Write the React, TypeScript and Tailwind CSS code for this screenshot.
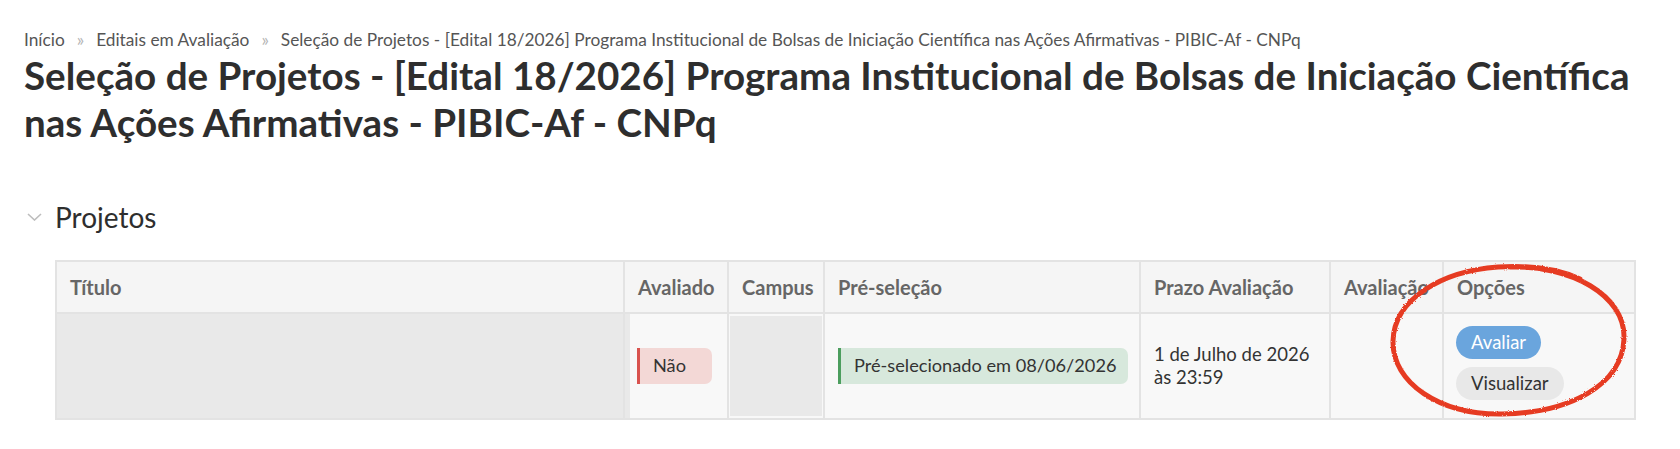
import React from "react";

export default function App() {
  return (
    <div className="relative w-[1680px] h-[449px] overflow-hidden bg-white font-['Lato','Noto_Sans',sans-serif] text-[#333]">
      <div className="pl-[24px] pr-[30px] pt-[29px]">
        <nav className="flex items-center whitespace-nowrap text-[17.3px] leading-[22px] text-[#555]">
          <span>Início</span>
          <span className="mx-[12px] text-[#b5b5b5]">»</span>
          <span>Editais em Avaliação</span>
          <span className="mx-[12px] text-[#b5b5b5]">»</span>
          <span>Seleção de Projetos - [Edital 18/2026] Programa Institucional de Bolsas de Iniciação Científica nas Ações Afirmativas - PIBIC-Af - CNPq</span>
        </nav>
        <h1 className="mt-[1px] text-[38.6px] font-bold leading-[47px] text-[#2e2e2e]">
          Seleção de Projetos - [Edital 18/2026] Programa Institucional de Bolsas de Iniciação Científica nas Ações Afirmativas - PIBIC-Af - CNPq
        </h1>
      </div>

      <div className="mt-[54px] flex items-center pl-[27px]">
        <svg width="15" height="8" viewBox="0 0 15 8" className="mr-[13px]">
          <polyline points="1,1 7.5,7 14,1" fill="none" stroke="#bdbdbd" strokeWidth="1.6" />
        </svg>
        <h2 className="text-[28px] leading-[34px] text-[#2e2e2e]">Projetos</h2>
      </div>

      <div className="pl-[55px] mt-[26px]">
        <table className="table-fixed border-collapse w-[1579px] text-[18.2px]">
          <colgroup>
            <col className="w-[568px]" />
            <col className="w-[104px]" />
            <col className="w-[96px]" />
            <col className="w-[316px]" />
            <col className="w-[190px]" />
            <col className="w-[113px]" />
            <col className="w-[192px]" />
          </colgroup>
          <thead>
            <tr className="h-[52px] bg-[#f5f5f5]">
              {["Título", "Avaliado", "Campus", "Pré-seleção", "Prazo Avaliação", "Avaliação", "Opções"].map((h) => (
                <th
                  key={h}
                  className="border-2 border-[#e3e3e3] px-[13px] text-left font-bold text-[20px] text-[#666] whitespace-nowrap overflow-visible"
                >
                  {h}
                </th>
              ))}
            </tr>
          </thead>
          <tbody>
            <tr className="h-[105px] bg-[#f8f8f8]">
              <td className="border-2 border-[#e3e3e3] p-0 align-top">
                <div className="h-[104px] w-[573px] bg-[#e9e9e9]" />
              </td>
              <td className="border-2 border-[#e3e3e3] px-[12px] align-middle">
                <span className="inline-flex h-[36px] w-[75px] items-center border-l-[3px] border-[#d9534f] bg-[#f3d8d6] pl-[13px] rounded-r-[7px] text-[#333]">
                  Não
                </span>
              </td>
              <td className="border-2 border-[#e3e3e3] p-0 align-middle">
                <div className="mx-auto h-[100px] w-[92px] bg-[#e9e9e9]" />
              </td>
              <td className="border-2 border-[#e3e3e3] px-[13px] align-middle">
                <span className="inline-flex h-[36px] items-center whitespace-nowrap border-l-[3px] border-[#4c9e5e] bg-[#d7e8dc] pl-[13px] pr-[12px] rounded-r-[7px] text-[#333]">
                  Pré-selecionado em 08/06/2026
                </span>
              </td>
              <td className="border-2 border-[#e3e3e3] px-[13px] align-middle text-[18.5px] leading-[23px] text-[#333]">
                1 de Julho de 2026
                <br />
                às 23:59
              </td>
              <td className="border-2 border-[#e3e3e3]" />
              <td className="border-2 border-[#e3e3e3] px-[12px] align-middle text-[18.5px]">
                <div className="flex flex-col items-start gap-[8px] -mt-[6px]">
                  <span className="inline-flex h-[33px] items-center rounded-full bg-[#6aa5dd] px-[15px] text-white">
                    Avaliar
                  </span>
                  <span className="inline-flex h-[33px] items-center rounded-full bg-[#e8e8e8] px-[15px] text-[#333]">
                    Visualizar
                  </span>
                </div>
              </td>
            </tr>
          </tbody>
        </table>
      </div>

      <svg
        className="pointer-events-none absolute left-[1380px] top-[255px]"
        width="260"
        height="170"
        viewBox="0 0 260 170"
      >
        <defs>
          <filter id="rough">
            <feTurbulence type="fractalNoise" baseFrequency="0.9" numOctaves="2" result="n" />
            <feDisplacementMap in="SourceGraphic" in2="n" scale="2.5" />
          </filter>
        </defs>
        <g filter="url(#rough)" fill="none" stroke="#e63b22" strokeLinecap="round">
          <path
            d="M130 12 C 190 10, 246 40, 244 84 C 242 130, 190 158, 122 159 C 60 160, 12 128, 13 86 C 14 44, 62 16, 118 12 C 150 10, 178 14, 200 24"
            strokeWidth="5"
          />
        </g>
      </svg>
    </div>
  );
}
